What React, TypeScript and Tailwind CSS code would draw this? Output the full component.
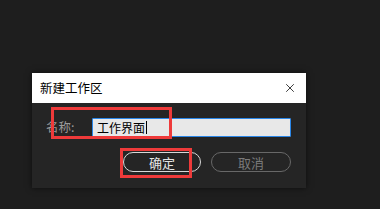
import { X } from 'lucide-react';

export default function App() {
    return (
        <div
            className="w-[380px] h-[209px] bg-[#1e1e1e] pt-[73px] pl-[32px] overflow-hidden"
            style={{ fontFamily: '"Noto Sans CJK SC", "Noto Sans", sans-serif' }}
        >
            <div className="relative w-[274px] bg-[#252525] shadow-[0_0_6px_rgba(0,0,0,0.6)]">
                {/* Title bar */}
                <div className="h-[30px] bg-white flex items-center justify-between pl-[8px] pr-[9px]">
                    <span className="text-[12.5px] text-black leading-none">新建工作区</span>
                    <X className="w-[14px] h-[14px] text-black" strokeWidth={1.3} />
                </div>

                {/* Body */}
                <div className="pt-[15px] pb-[16px] pl-[14px] pr-[15px]">
                    <div className="flex items-center h-[19px]">
                        <span className="w-[46px] text-[12.5px] text-[#9a9a9a] leading-none">名称:</span>
                        <div className="flex-1 h-[19px] bg-[#e8e8e8] border-[1.5px] border-[#2a86e8] rounded-[1px] flex items-center pl-[4px]">
                            <span className="text-[12px] text-black leading-none">工作界面</span>
                            <span className="w-px h-[13px] bg-black ml-px" />
                        </div>
                    </div>
                    <div className="flex justify-end gap-[10px] mt-[15px]">
                        <button className="w-[78px] h-[20px] rounded-full border-[1.5px] border-[#d8d8d8] text-[13px] text-[#e6e6e6] leading-none flex items-center justify-center">
                            确定
                        </button>
                        <button className="w-[80px] h-[20px] rounded-full border-[1.5px] border-[#686868] text-[13px] text-[#7a7a7a] leading-none flex items-center justify-center">
                            取消
                        </button>
                    </div>
                </div>

                {/* Annotation boxes */}
                <div className="absolute left-[19px] top-[34px] w-[121px] h-[32px] border-[3px] border-[#ee3a3a] pointer-events-none" />
                <div className="absolute left-[88px] top-[75px] w-[72px] h-[30px] border-[3px] border-[#ee3a3a] pointer-events-none" />
            </div>
        </div>
    );
}
